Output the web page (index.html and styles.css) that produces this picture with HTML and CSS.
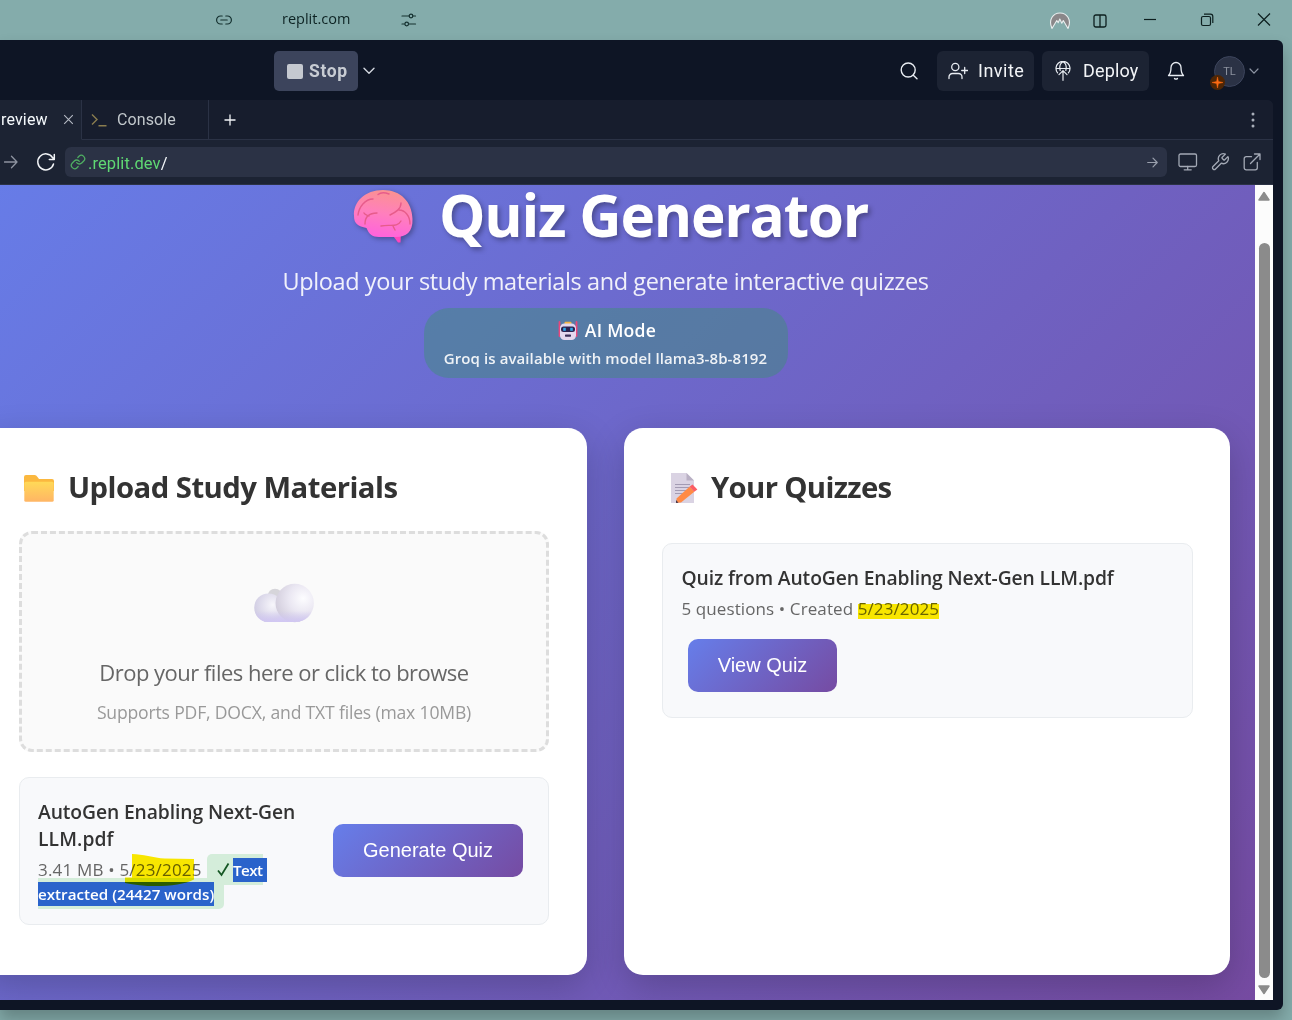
FILE: index.html
```html
<!DOCTYPE html>
<html lang="en">
<head>
<meta charset="utf-8">
<title>Quiz Generator</title>
<link rel="stylesheet" href="styles.css">
</head>
<body>
<header class="titlebar">
  <svg class="tb-link" width="16" height="10" viewBox="0 0 16 10" fill="none" stroke="#14302f" stroke-width="1.2" stroke-linecap="round"><path d="M6.200 1H4.600a4 4 0 0 0 0 8h1.600M9.800 1h1.600a4 4 0 0 1 0 8H9.800M4.800 5h6.400"/></svg>
  <span class="tb-host">replit.com</span>
  <svg class="tb-sliders" width="16" height="14" viewBox="0 0 16 14" fill="none" stroke="#14302f" stroke-width="1.2" stroke-linecap="round"><path d="M1 3h7M12 3h2.500M1 11h2.500M8 11h6.500"/><circle cx="10" cy="3" r="1.8"/><circle cx="5.700" cy="11" r="1.8"/></svg>
  <div class="tb-right">
    <svg width="22" height="18" viewBox="0 0 22 18"><path d="M3 16.500C-1 8 4 1 11 1s12 7 8 15.500L14.300 8.500l-1.500 2.700L10.800 7l-1.600 3.700L7.800 8.500z" fill="#8a8789" stroke="#e8eeee" stroke-width="1.1" stroke-linejoin="round"/></svg>
    <svg width="14" height="14" viewBox="0 0 14 14" fill="none" stroke="#0d1f1f" stroke-width="1.300"><rect x="1" y="1" width="12" height="12" rx="1.800"/><path d="M7 1v12"/></svg>
    <svg width="14" height="14" viewBox="0 0 14 14" stroke="#0d1f1f" stroke-width="1.200"><path d="M1 6.500h12"/></svg>
    <svg width="14" height="14" viewBox="0 0 14 14" fill="none" stroke="#0d1f1f" stroke-width="1.200"><rect x="1.500" y="3.500" width="9" height="9" rx="1.500"/><path d="M4 1.200h6.500a2.300 2.300 0 0 1 2.300 2.300V10"/></svg>
    <svg width="14" height="14" viewBox="0 0 14 14" stroke="#0d1f1f" stroke-width="1.200"><path d="M1 .5l12 12M13 .5L1 12.500"/></svg>
  </div>
</header>
<div class="window">
  <div class="toolbar">
    <div class="stop"><i class="stop-square"></i><span class="t-stop">Stop</span></div>
    <svg class="run-chevron" width="12" height="8" viewBox="0 0 12 8" fill="none" stroke="#d3d7df" stroke-width="1.400" stroke-linecap="round" stroke-linejoin="round"><path d="M1 1.200l5 5 5-5"/></svg>
    <div class="tools">
      <svg class="search" width="20" height="20" viewBox="0 0 20 20" fill="none" stroke="#e8ecf2" stroke-width="1.400" stroke-linecap="round"><circle cx="9.200" cy="9" r="7"/><path d="M14.300 14.200l3.700 3.600"/></svg>
      <div class="btn invite">
        <svg width="20" height="18" viewBox="0 0 20 18" fill="none" stroke="#e8ecf2" stroke-width="1.300" stroke-linecap="round"><circle cx="7.300" cy="5" r="3.600"/><path d="M1 16.500v-1.500a3.500 3.500 0 0 1 3.500-3.500h6a3.500 3.500 0 0 1 3.500 3.500v1.500M16.700 5.500v6M13.700 8.500h6"/></svg>
        <span class="t-invite">Invite</span>
      </div>
      <div class="btn deploy">
        <svg width="16" height="20" viewBox="0 0 16 20" fill="none" stroke="#e8ecf2" stroke-width="1.200" stroke-linecap="round" stroke-linejoin="round"><path d="M2.600 11.800A7 7 0 1 1 13.400 11.800M1 7.500h14M5.200 9.500C4.200 5.500 5.500 2 8 .700c2.500 1.300 3.800 4.800 2.800 8.800M8 19.300V10M4 13.700L8 9.700l4 4"/></svg>
        <span class="t-deploy">Deploy</span>
      </div>
      <svg class="bell" width="18" height="20" viewBox="0 0 18 20" fill="none" stroke="#e8ecf2" stroke-width="1.300" stroke-linecap="round" stroke-linejoin="round"><path d="M1.500 14.500C3.300 12.800 4 11 4 6.500a5 5 0 0 1 10 0c0 4.500.7 6.300 2.500 8zM7.500 17.500c.8.900 2.200.9 3 0"/></svg>
      <div class="avatar">TL<span class="spark"><svg width="11" height="11" viewBox="0 0 11 11"><path d="M5.500 0l.9 4.600 4.600.9-4.600.9-.9 4.600-.9-4.600L0 5.500l4.600-.9z" fill="#ff6a13" stroke="#ff6a13" stroke-width=".5"/></svg></span></div>
      <svg class="user-chevron" width="10" height="7" viewBox="0 0 10 7" fill="none" stroke="#8d94a3" stroke-width="1.200" stroke-linecap="round"><path d="M1 1l4 4.200L9 1"/></svg>
    </div>
  </div>
  <div class="pane">
    <div class="tabs">
      <div class="tab active"><span class="t-review">review</span>
        <svg width="11" height="11" viewBox="0 0 11 11" stroke="#b5bac4" stroke-width="1.100"><path d="M1.200 1.200l8.600 8.600M9.800 1.200L1.200 9.800"/></svg></div>
      <div class="tab console"><svg width="16" height="14" viewBox="0 0 16 14" fill="none" stroke="#8a7d4f" stroke-width="1.400"><path d="M1 1.500l5 5-5 5M7.500 12.700h8"/></svg><span class="t-console">Console</span></div>
      <div class="tab-rest">
        <svg width="12" height="12" viewBox="0 0 12 12" stroke="#f2f4f7" stroke-width="1.300"><path d="M6 .5v11M.5 6h11"/></svg>
        <svg width="4" height="16" viewBox="0 0 4 16" fill="#a9afba"><circle cx="2" cy="2" r="1.500"/><circle cx="2" cy="8" r="1.500"/><circle cx="2" cy="14" r="1.500"/></svg>
      </div>
    </div>
    <div class="address">
      <svg class="fwd" width="14" height="14" viewBox="0 0 14 14" fill="none" stroke="#8d93a0" stroke-width="1.300" stroke-linecap="round" stroke-linejoin="round"><path d="M.5 7h12.500M7.500 1.300L13 7l-5.500 5.700"/></svg>
      <svg class="reload" width="20" height="20" viewBox="0 0 20 20" fill="none" stroke="#f2f4f7" stroke-width="1.500" stroke-linecap="round" stroke-linejoin="round"><path d="M17.500 12a8 8 0 1 1-.8-6.200L18.300 7.500M18.300 2.500v5h-5"/></svg>
      <div class="url">
        <svg width="16" height="16" viewBox="0 0 24 24" fill="none" stroke="#4fae62" stroke-width="1.900" stroke-linecap="round" stroke-linejoin="round"><path d="M10 13a5 5 0 0 0 7.540.540l3-3a5 5 0 0 0-7.070-7.070l-1.720 1.710M14 11a5 5 0 0 0-7.540-.54l-3 3a5 5 0 0 0 7.070 7.070l1.710-1.710"/></svg>
        <span class="t-url">.replit.dev<b>/</b></span>
        <svg class="go" width="11" height="11" viewBox="0 0 11 11" fill="none" stroke="#9aa0ad" stroke-width="1.200" stroke-linecap="round" stroke-linejoin="round"><path d="M.7 5.500h9.500M6 1.200l4.200 4.300L6 9.800"/></svg>
      </div>
      <svg class="monitor" width="20" height="18" viewBox="0 0 20 18" fill="none" stroke="#a3a9b5" stroke-width="1.300" stroke-linecap="round" stroke-linejoin="round"><rect x="1" y="1" width="17.500" height="12.500" rx="1.500"/><path d="M9.700 13.500v3.300M6.200 16.800h7"/></svg>
      <svg class="wrench" width="20" height="20" viewBox="0 0 24 24" fill="none" stroke="#a3a9b5" stroke-width="1.600" stroke-linecap="round" stroke-linejoin="round"><path d="M14.700 6.300a1 1 0 0 0 0 1.400l1.600 1.600a1 1 0 0 0 1.400 0l3.770-3.770a6 6 0 0 1-7.940 7.940l-6.910 6.910a2.120 2.120 0 0 1-3-3l6.910-6.910a6 6 0 0 1 7.940-7.940z"/></svg>
      <svg class="external" width="18" height="18" viewBox="0 0 18 18" fill="none" stroke="#a3a9b5" stroke-width="1.300" stroke-linecap="round" stroke-linejoin="round"><path d="M14.300 9.500v5.300a2 2 0 0 1-2 2H3.200a2 2 0 0 1-2-2V5.700a2 2 0 0 1 2-2h5.300M11.500 1H17v5.500M17 1L7.500 10.500"/></svg>
    </div>
    <div class="viewport">
      <div class="app">
        <div class="page">
          <div class="hero">
            <h1 class="hero-title">
              <svg class="brain" width="62" height="58" viewBox="0 0 62 58">
                <defs><linearGradient id="brainFill" x1=".6" y1="0" x2=".4" y2="1"><stop offset="0" stop-color="#fb928f"/><stop offset=".5" stop-color="#ff7fbd"/><stop offset="1" stop-color="#ff62dd"/></linearGradient></defs>
                <path d="M39 45l7 9.500h2.500l.5-11z" fill="#ff45bd"/>
                <path d="M2 28C1 14 13 2 31 2c18 0 29 12 29.500 29C61 44 54 49 44 49H27c-7 0-10-3-12.500-9C6 38 2 36 2 28z" fill="url(#brainFill)"/>
                <g fill="none" stroke="#e75c8b" stroke-width="1.400" stroke-linecap="round"><path d="M6 27C7 19 13 11 21 11M26 6.500c3-2.500 7-2 11-.5M49 15c0 6-5 9-11 12M47 22c6 0 11 6 11 14M13 36c0-7 3-11 12-11M17 28c-2-1-4-1-5-3M29 38c9-2 16 2 20-5M41 38l2 4"/></g>
              </svg>
              <span class="t-h1">Quiz Generator</span>
            </h1>
            <p class="t-sub">Upload your study materials and generate interactive quizzes</p>
            <div class="mode">
              <div class="mode-line">
                <svg width="20" height="20" viewBox="0 0 20 20"><path d="M1.500 1v14M18.500 1v14" stroke="#e8467c" stroke-width="1.800" stroke-linecap="round"/><rect x="6.500" y=".8" width="7" height="3" rx="1" fill="#f2b544"/><rect x="2" y="2.500" width="16" height="16.500" rx="4.500" fill="#e4d8ee"/><rect x="3" y="5.500" width="14" height="5.500" rx="2.500" fill="#2c2350"/><rect x="5.200" y="6.800" width="2.600" height="3" fill="#2fa9e8"/><rect x="12.200" y="6.800" width="2.600" height="3" fill="#2fa9e8"/><rect x="7" y="13.500" width="6" height="2.200" rx=".6" fill="#3b2f58"/></svg>
                <span class="t-ai">AI Mode</span>
              </div>
              <div class="mode-sub">Groq is available with model llama3-8b-8192</div>
            </div>
          </div>
          <div class="cards">
            <section class="card upload">
              <h2 class="card-title">
                <svg width="30" height="27" viewBox="0 0 30 27"><defs><linearGradient id="folderFill" x1="0" y1="0" x2="0" y2="1"><stop offset="0" stop-color="#ffd957"/><stop offset="1" stop-color="#ffb565"/></linearGradient></defs><path d="M0 2a2 2 0 0 1 2-2h8.500c1.500 0 2 .8 3 2l1.500 2H28a2 2 0 0 1 2 2v10H0z" fill="#fbb83f"/><rect x=".3" y="6.800" width="29.400" height="20" rx="1.600" fill="url(#folderFill)"/></svg>
                <span class="t-upload">Upload Study Materials</span>
              </h2>
              <div class="dropzone">
                <svg class="cloud" width="60" height="40" viewBox="0 0 60 40"><defs>
                  <radialGradient id="puffA" cx=".72" cy=".38" r=".75"><stop offset="0" stop-color="#fdfdff"/><stop offset=".5" stop-color="#eae7f2"/><stop offset="1" stop-color="#d2cddc"/></radialGradient>
                  <radialGradient id="puffB" cx=".65" cy=".4" r=".7"><stop offset="0" stop-color="#f7f6fb"/><stop offset="1" stop-color="#cfcbe2"/></radialGradient>
                  <linearGradient id="cloudBase" x1="0" y1="0" x2="0" y2="1"><stop offset=".35" stop-color="#d0c6f2" stop-opacity="0"/><stop offset="1" stop-color="#d0c6f2"/></linearGradient></defs>
                  <circle cx="21" cy="13" r="7.300" fill="#d6d5da"/><rect x="10" y="20" width="36" height="19" fill="#dcd6f0"/><circle cx="14.500" cy="24.700" r="14.300" fill="url(#puffB)"/><circle cx="40.700" cy="20" r="19.200" fill="url(#puffA)"/><path d="M.3 22h59.500c-1 10-8 17-19.100 17H14.500C6 39 0 33 .3 22z" fill="url(#cloudBase)"/></svg>
                <div class="drop-main">Drop your files here or click to browse</div>
                <div class="drop-hint">Supports PDF, DOCX, and TXT files (max 10MB)</div>
              </div>
              <div class="file">
                <div class="file-info">
                  <div class="file-name">AutoGen Enabling Next-Gen<br><span class="t-name2">LLM.pdf</span></div>
                  <div class="file-meta"><span class="t-meta">3.41 MB • 5/23/2025</span><span class="status status-a"><svg width="13" height="15" viewBox="0 0 13 15" fill="none" stroke="#155724" stroke-width="1.800"><path d="M1 8.500l3.500 4.500L11.500 1.500"/></svg><span class="sel t-text">Text</span></span></div>
                  <div class="file-status"><span class="status status-b"><span class="sel t-words">extracted (24427 words)</span></span></div>
                  <svg class="marker" width="72" height="34" viewBox="0 0 72 34"><path d="M7 1C18 1 28 5 40 5.500L69 6v20.500C55 34 22 35 0 30v-5.500h7z" fill="#ffec00"/></svg>
                </div>
                <div class="action">Generate Quiz</div>
              </div>
            </section>
            <section class="card quizzes">
              <h2 class="card-title">
                <svg width="28" height="30" viewBox="0 0 28 30"><path d="M0 0h15.500L23 7.500V30H0z" fill="#dad3e3"/><path d="M15.500 0L23 7.500h-7.500z" fill="#b9b0c4"/><path d="M4 11.500h15M4 14.500h14M4 17.500h12M4 20.500h8" stroke="#a39bb3" stroke-width="1.100"/><path d="M5.500 25.500L18.500 13.800l4.800 5L10 29.500l-4.500.2z" fill="#ff8a45"/><path d="M18.500 13.800l3-2.300 4.900 5-3.100 2.300z" fill="#fb5d63"/><path d="M5 27l2.500 2.800L5 30z" fill="#4a3848"/></svg>
                <span class="t-quizzes">Your Quizzes</span>
              </h2>
              <div class="quiz">
                <div class="quiz-name">Quiz from AutoGen Enabling Next-Gen LLM.pdf</div>
                <div class="quiz-meta">5 questions • Created <mark>5/23/2025</mark></div>
                <div class="action view">View Quiz</div>
              </div>
            </section>
          </div>
        </div>
      </div>
      <div class="scrollbar">
        <svg width="14" height="10" viewBox="0 0 14 10"><path d="M7 1.500L12 9H2z" fill="#8b8b8b" stroke="#8b8b8b" stroke-width="1.500" stroke-linejoin="round"/></svg>
        <div class="thumb"></div>
        <svg width="14" height="10" viewBox="0 0 14 10"><path d="M7 8.500L12 1H2z" fill="#8b8b8b" stroke="#8b8b8b" stroke-width="1.500" stroke-linejoin="round"/></svg>
      </div>
    </div>
  </div>
</div>
</body>
</html>
```

FILE: styles.css
```css
* { box-sizing: border-box; }
body {
  margin: 0;
  width: 1292px;
  height: 1020px;
  overflow: hidden;
  background: #84acab;
  font-family: "Open Sans", "Noto Sans", sans-serif;
}
svg { display: block; flex: none; }
h1, h2, p { margin: 0; }

/* Browser title bar */
.titlebar { height: 40px; display: flex; align-items: center; padding-left: 216px; color: #0d2323; }
.tb-host { margin-left: 50px; font-size: 14.5px; line-height: 38px; height: 40px; white-space: nowrap; width: 70px; }
.tb-sliders { margin-left: 49px; }
.tb-right { margin-left: auto; display: flex; align-items: center; padding-right: 21px; gap: 43px; height: 38px; }
.tb-right svg:first-child { margin: 2px -21px 0 -1px; }
.tb-right svg:nth-child(2) { margin: 2px -7px 0 0; }

/* Workspace window */
.window {
  width: 1283px; height: 970px; background: #0e1525; border-radius: 0 6px 6px 0;
  box-shadow: 0 9px 16px rgba(0, 0, 0, .24);
  display: flex; flex-direction: column;
}
.toolbar { height: 60px; padding: 11px 24px 9px 274px; display: flex; align-items: center; font-family: Roboto, sans-serif; }
.stop { width: 84px; height: 40px; border-radius: 5px; background: #3c445c; display: flex; align-items: center; padding-left: 13px; color: #c8ccd3; font-weight: 700; font-size: 17.5px; white-space: nowrap; }
.stop-square { width: 16px; height: 15px; border-radius: 2px; background: #c5c9d0; margin-right: 6px; }
.t-stop { letter-spacing: .6px; }
.run-chevron { margin-left: 5px; }
.tools { margin-left: auto; display: flex; align-items: center; color: #f2f4f7; font-size: 18px; white-space: nowrap; }
.search { margin-right: 18px; }
.btn { height: 40px; border-radius: 6px; background: #1c2333; display: flex; align-items: center; }
.btn span { padding-bottom: 2px; }
.invite { width: 97px; padding-left: 11px; gap: 10px; margin-right: 8px; }
.deploy { width: 107px; padding-left: 13px; gap: 12px; }
.t-invite { letter-spacing: .5px; }
.t-deploy { letter-spacing: .15px; }
.bell { margin: 0 29px 0 18px; }
.avatar { position: relative; width: 31px; height: 31px; border-radius: 50%; background: #2b3245; border: 1px solid #3c445c; color: #8d93a0; font-size: 11px; display: flex; align-items: center; justify-content: center; }
.spark { position: absolute; left: -5px; bottom: -4px; width: 15px; height: 15px; border-radius: 50%; background: #4f2605; display: flex; align-items: center; justify-content: center; }
.user-chevron { margin-left: 4px; }

.pane { width: 1273px; height: 900px; border-radius: 0 6px 0 0; overflow: hidden; font-family: Roboto, sans-serif; background: #1c2333; }
.tabs { height: 40px; display: flex; background: #171d2d; font-size: 16px; line-height: 42px; white-space: nowrap; }
.tab { display: flex; align-items: center; height: 40px; border-bottom: 1px solid #2b3245; border-right: 1px solid #2b3245; color: #c2c8cc; }
.tab.active { width: 82px; background: #1c2333; border-bottom-color: #1c2333; color: #f5f9fc; padding-left: 1px; }
.t-review { width: 62px; letter-spacing: .15px; }
.console { width: 127px; padding-left: 9px; gap: 10px; }
.t-console { letter-spacing: .1px; }
.tab-rest { flex: 1; display: flex; justify-content: space-between; align-items: center; padding: 0 18px 0 14.500px; border-bottom: 1px solid #2b3245; }
.address { height: 45px; display: flex; align-items: center; border-bottom: 1px solid #2b3245; }
.fwd { margin-left: 4px; }
.reload { margin: 0 9px 0 18px; }
.url { width: 1102px; height: 30px; border-radius: 6px; background: #2b3245; display: flex; align-items: center; padding: 0 9px 0 5px; color: #5fd873; font-size: 16.500px; white-space: nowrap; }
.t-url { margin-left: 2px; padding-top: 3px; line-height: 30px; letter-spacing: .1px; }
.url b { font-weight: 400; color: #f5f9fc; }
.go { margin-left: auto; }
.monitor { margin-left: 11px; }
.wrench { margin-left: 12px; }
.external { margin-left: 13px; }

/* Preview */
.viewport { height: 815px; display: flex; }
.app {
  width: 1255px; height: 815px; overflow: hidden; display: flex; justify-content: flex-end;
  background: linear-gradient(135deg, #667eea 0%, #764ba2 100%) right bottom / 1299px 862px no-repeat;
  font-family: "Open Sans", "Noto Sans", sans-serif; white-space: nowrap;
}
.page { flex: none; width: 1299px; padding: 0 25px; }
.hero { height: 243px; display: flex; flex-direction: column; align-items: center; color: #fff; }
.hero-title { height: 68px; width: 515px; margin-left: 8px; display: flex; align-items: center; font-size: 58.500px; line-height: 58px; font-weight: 700; gap: 25px; text-shadow: 2.500px 2.500px 5px rgba(0, 0, 0, .3); padding-bottom: 10px; }
.t-h1 { letter-spacing: -1.250px; }
.brain { filter: drop-shadow(2.500px 2.500px 2.500px rgba(0, 0, 0, .3)); margin-top: 5px; }
.t-sub { height: 55px; font-size: 23.500px; line-height: 57px; opacity: .9; letter-spacing: -.397px; }
.mode { width: 364px; height: 70px; border-radius: 25px; background: rgba(62, 142, 122, .48); font-weight: 600; padding-top: 9px; }
.mode-line { display: flex; justify-content: center; align-items: center; gap: 7px; height: 28px; font-size: 17.600px; margin-left: 3px; }
.t-ai { letter-spacing: .25px; padding-bottom: 2px; }
.mode-sub { height: 28px; line-height: 27px; text-align: center; font-size: 15px; opacity: .9; letter-spacing: .09px; }
.cards { display: grid; grid-template-columns: 606px 606px; gap: 37px; }
.card { height: 547px; border-radius: 19px; background: #fff; padding: 38px; box-shadow: 0 12px 37px rgba(0, 0, 0, .2); }
.card-title { display: flex; align-items: center; height: 45px; font-size: 29.300px; line-height: 41px; padding-bottom: 2px; font-weight: 700; color: #333; }
.upload .card-title { padding-left: 5px; gap: 14px; }
.upload .card-title svg { margin-top: 2px; }
.quizzes .card-title { padding-left: 9px; gap: 12px; }
.t-upload { letter-spacing: -.540px; }
.t-quizzes { letter-spacing: -.680px; }
.dropzone { margin-top: 20px; width: 530px; height: 221px; border: 3px dashed #ddd; border-radius: 13px; background: #fafafa; display: flex; flex-direction: column; align-items: center; padding-top: 49px; }
.drop-main { margin-top: 29px; height: 43px; line-height: 41px; font-size: 22px; color: #666; letter-spacing: -.520px; }
.drop-hint { height: 34px; line-height: 34px; font-size: 17.600px; color: #999; letter-spacing: -.190px; }
.file { margin-top: 25px; width: 530px; height: 148px; border: 1px solid #e9ecef; border-radius: 10px; background: #f8f9fb; padding: 20px 25px 0 18px; display: flex; justify-content: space-between; }
.file-info { position: relative; width: 270px; }
.file-name { font-size: 19.300px; line-height: 27px; font-weight: 600; color: #333; height: 54px; letter-spacing: -.100px; }
.t-name2 { letter-spacing: .100px; }
.file-meta { height: 31px; margin-top: 2px; display: flex; align-items: center; font-size: 17px; line-height: 30px; color: #666; }
.t-meta { width: 169px; letter-spacing: .190px; }
.status { background: #d4edda; height: 31px; display: flex; align-items: center; font-size: 15.200px; font-weight: 600; }
.status-a { width: 56px; padding-left: 10px; border-radius: 5px 0 0 5px; gap: 3px; }
.status-b { width: 186px; border-radius: 0 0 5px 0; }
.file-status { margin-top: -7px; }
.sel { background: #2a63cb; color: #fff; height: 24px; line-height: 25px; flex: none; }
.t-text { width: 34px; letter-spacing: -.550px; }
.marker { position: absolute; left: 87px; top: 55px; mix-blend-mode: multiply; }
.action { width: 190px; height: 53px; margin-top: 26px; border-radius: 10px; background: linear-gradient(135deg, #667eea 0%, #764ba2 100%); color: #fff; font: 20px/52px "Liberation Sans", Arial, sans-serif; text-align: center; }
.quiz { margin-top: 32px; width: 531px; height: 175px; border: 1px solid #e9ecef; border-radius: 10px; background: #f8f9fb; padding: 20px 19px 0 18.500px; }
.quiz-name { height: 29px; line-height: 28px; font-size: 19.300px; font-weight: 600; color: #333; letter-spacing: -.115px; }
.quiz-meta { height: 31px; line-height: 31px; font-size: 17px; color: #666; letter-spacing: .100px; }
.quiz-meta mark { background: linear-gradient(#f8e600, #f8e600) 0 7px / 100% 15px no-repeat; color: #6a6400; }
.view { width: 149px; margin: 15px 0 0 6.500px; }

.scrollbar { width: 18px; background: #fcfcfc; display: flex; flex-direction: column; align-items: center; padding: 6px 0 5px; }
.thumb { width: 11px; height: 735px; margin: 42px 0 7px; border-radius: 6px; background: #8b8b8b; }
```
